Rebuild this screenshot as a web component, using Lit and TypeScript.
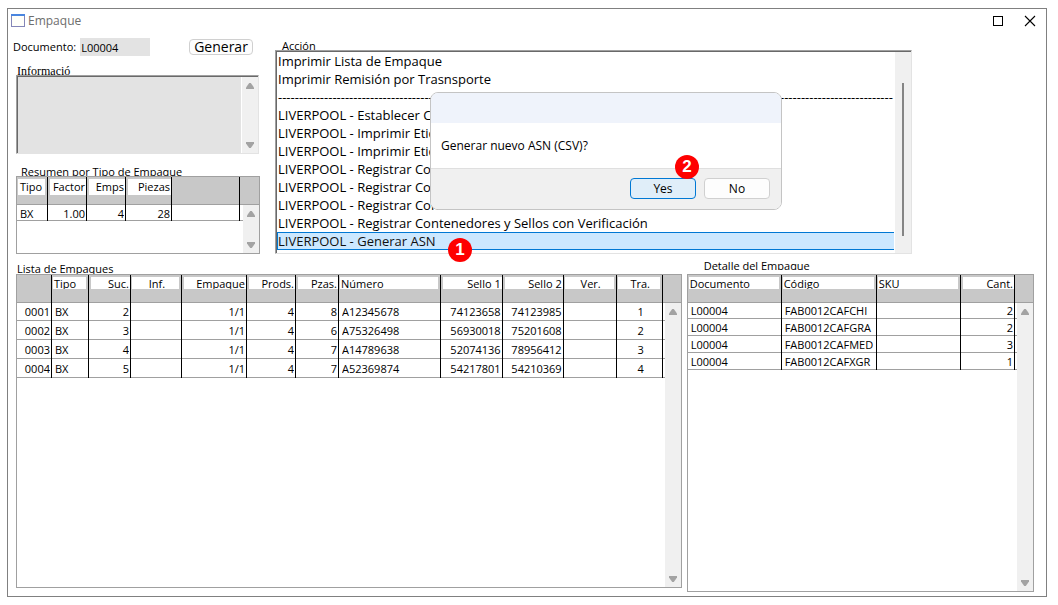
import { LitElement, html, css, svg } from "lit";
import { customElement, property } from "lit/decorators.js";
import { classMap } from "lit/directives/class-map.js";

type Align = "left" | "right" | "center";

interface Column {
  title: string;
  width?: number;
  align?: Align;
}

const PACK_COLUMNS: Column[] = [
  { title: "", width: 35, align: "right" },
  { title: "Tipo", width: 37 },
  { title: "Suc.", width: 42, align: "right" },
  { title: "Inf.", width: 51, align: "center" },
  { title: "Empaque", width: 65, align: "right" },
  { title: "Prods.", width: 49, align: "right" },
  { title: "Pzas.", width: 43, align: "right" },
  { title: "Número" },
  { title: "Sello 1", width: 62, align: "right" },
  { title: "Sello 2", width: 61, align: "right" },
  { title: "Ver.", width: 53, align: "center" },
  { title: "Tra.", width: 46, align: "center" },
];

const PACK_ROWS = [
  ["0001", "BX", "2", "", "1/1", "4", "8", "A12345678", "74123658", "74123985", "", "1"],
  ["0002", "BX", "3", "", "1/1", "4", "6", "A75326498", "56930018", "75201608", "", "2"],
  ["0003", "BX", "4", "", "1/1", "4", "7", "A14789638", "52074136", "78956412", "", "3"],
  ["0004", "BX", "5", "", "1/1", "4", "7", "A52369874", "54217801", "54210369", "", "4"],
];

const DETAIL_COLUMNS: Column[] = [
  { title: "Documento", width: 94 },
  { title: "Código", width: 95 },
  { title: "SKU" },
  { title: "Cant.", width: 54, align: "right" },
];

const DETAIL_ROWS = [
  ["L00004", "FAB0012CAFCHI", "", "2"],
  ["L00004", "FAB0012CAFGRA", "", "2"],
  ["L00004", "FAB0012CAFMED", "", "3"],
  ["L00004", "FAB0012CAFXGR", "", "1"],
];

const SUMMARY_COLUMNS: Column[] = [
  { title: "Tipo", width: 31 },
  { title: "Factor", width: 39, align: "right" },
  { title: "Emps", width: 39, align: "right" },
  { title: "Piezas", width: 46, align: "right" },
  { title: "" },
];

const SUMMARY_ROWS = [["BX", "1.00", "4", "28", ""]];

const ACTIONS = [
  "Imprimir Lista de Empaque",
  "Imprimir Remisión por Trasnsporte",
  "-".repeat(147),
  "LIVERPOOL - Establecer Cita",
  "LIVERPOOL - Imprimir Etiquetas",
  "LIVERPOOL - Imprimir Etiquetas",
  "LIVERPOOL - Registrar Contenedores",
  "LIVERPOOL - Registrar Contenedores",
  "LIVERPOOL - Registrar Contenedores con Verificación",
  "LIVERPOOL - Registrar Contenedores y Sellos con Verificación",
  "LIVERPOOL - Generar ASN",
];

@customElement("scroll-strip")
class ScrollStrip extends LitElement {
  static styles = css`
    :host {
      display: flex;
      flex-direction: column;
      justify-content: space-between;
      align-items: center;
      width: 16px;
      padding: 5px 0 4px;
      box-sizing: border-box;
      background: #f0f0f0;
    }
    .arrow {
      display: block;
      fill: #a3a3a3;
    }
  `;

  render() {
    const arrow = (d: string) => html`
      <svg class="arrow" width="10" height="8" viewBox="0 0 10 8" aria-hidden="true">
        ${svg`<path d=${d} />`}
      </svg>
    `;
    return html`${arrow("M4.2 1h1.6L9 5.6V7H1V5.6z")}${arrow("M4.2 7h1.6L9 2.4V1H1v1.4z")}`;
  }
}

@customElement("data-grid")
class DataGrid extends LitElement {
  @property({ attribute: false }) columns: Column[] = [];
  @property({ attribute: false }) rows: string[][] = [];
  @property() label = "";
  @property({ reflect: true }) density = "normal";

  static styles = css`
    :host {
      --row: 19px;
      --chip: 12px;
      --tail: 2px;
      display: flex;
      border: 1px solid #a0a0a0;
      box-sizing: border-box;
      background: #fff;
      font: 11px/16px "Open Sans", "Noto Sans", sans-serif;
    }
    :host([density="compact"]) {
      --row: 17px;
    }
    :host([density="tall"]) {
      --row: 17px;
      --chip: 16px;
      --tail: 3px;
    }
    .body {
      flex: 1;
      min-width: 0;
    }
    table {
      width: 100%;
      table-layout: fixed;
      border-collapse: separate;
      border-spacing: 0;
    }
    th,
    td {
      padding: 0;
      overflow: hidden;
      white-space: nowrap;
      font-weight: 400;
      text-align: left;
      border-right: 1px solid #000;
    }
    .tail {
      width: var(--tail);
      border-right: 0;
    }
    th {
      height: 25px;
      padding-top: 2px;
      padding-bottom: 1px;
      vertical-align: top;
      background: #c8c8c8;
      box-shadow: inset 0 -1px #a0a0a0;
    }
    .chip {
      height: var(--chip);
      margin: 0 2px 0 1px;
      padding: 0 1px;
      overflow: hidden;
      background: #fff;
      line-height: 14px;
    }
    :host([density="tall"]) .chip {
      padding-left: 2px;
      line-height: 16px;
    }
    .right {
      text-align: right;
    }
    .center {
      text-align: center;
    }
    .center .chip {
      padding-left: 4px;
    }
    .right .chip {
      margin-right: 0;
      margin-left: 2px;
    }
    td {
      height: var(--row);
      line-height: 15px;
      padding: 0 0 0 3px;
      vertical-align: bottom;
      box-shadow: inset 0 -1px #a0a0a0;
    }
    .line {
      padding-bottom: 1px;
      overflow: hidden;
    }
    :host([density="tall"]) .line {
      padding-bottom: 0;
    }
    :host([density="normal"]) .line {
      padding-bottom: 2px;
    }
    .first td {
      height: calc(var(--row) - 1px);
    }
    td.right {
      padding: 0 1px 0 0;
    }
    td.center {
      padding: 0 0 0 3px;
    }
    td.tail {
      padding: 0;
    }
    .rail {
      display: flex;
      flex-direction: column;
    }
    .corner {
      height: 28px;
      background: #c8c8c8;
      box-shadow: inset 0 -1px #a0a0a0;
    }
    .strip {
      flex: 1;
    }
  `;

  render() {
    return html`
      <div class="body">
        <table aria-label=${this.label}>
          <colgroup>
            ${this.columns.map((c) => html`<col style=${c.width ? `width:${c.width}px` : ""} />`)}
            <col class="tail" />
          </colgroup>
          <thead>
            <tr>
              ${this.columns.map(
                (c) => html`<th scope="col" class=${c.align ?? "left"}>
                  ${c.title ? html`<div class="chip">${c.title}</div>` : ""}
                </th>`,
              )}
              <th class="tail"></th>
            </tr>
          </thead>
          <tbody>
            ${this.rows.map(
              (row, i) => html`<tr class=${classMap({ first: i === 0 })}>
                ${row.map(
                  (cell, j) =>
                    html`<td class=${this.columns[j].align ?? "left"}><div class="line">${cell}</div></td>`,
                )}
                <td class="tail"></td>
              </tr>`,
            )}
          </tbody>
        </table>
      </div>
      <div class="rail">
        <div class="corner"></div>
        <scroll-strip class="strip"></scroll-strip>
      </div>
    `;
  }
}

@customElement("app-root")
class AppRoot extends LitElement {
  static styles = css`
    :host {
      display: block;
      box-sizing: border-box;
      min-height: 100vh;
      background: #fff;
      color: #000;
      font: 12px/16px "Open Sans", "Noto Sans", sans-serif;
    }
    * {
      box-sizing: border-box;
    }
    .page {
      display: flex;
      min-height: 100vh;
      padding: 8px 11px 8px 7px;
    }
    .window {
      position: relative;
      flex: 1;
      display: flex;
      flex-direction: column;
      border: 1px solid #808080;
    }
    .titlebar {
      display: flex;
      align-items: center;
      height: 24px;
      padding: 0 10px 0 3px;
      color: #6e6e6e;
    }
    .title {
      flex: 1;
      margin: 0 0 0 3px;
      font-size: 12px;
      font-weight: 400;
    }
    .winbtn {
      display: flex;
      padding: 0;
      border: 0;
      background: none;
    }
    .winbtns {
      display: flex;
      gap: 20px;
    }
    .top {
      display: grid;
      grid-template-columns: 247px 1fr;
      gap: 15px;
      padding: 0 134px 0 5px;
    }
    .side {
      padding-top: 5px;
    }
    .docrow {
      display: flex;
      align-items: center;
      height: 18px;
      font-size: 11px;
    }
    .docfield {
      width: 70px;
      height: 18px;
      margin-left: 4px;
      padding: 0 1px;
      border: 0;
      font: inherit;
      background: #e3e3e3;
    }
    .generate {
      width: 64px;
      height: 16px;
      margin-left: auto;
      margin-right: 7px;
      padding: 0;
      border: 1px solid #d0d0d0;
      border-radius: 4px;
      background: #fdfdfd;
      color: #000;
      font: 14px/14px "Open Sans", "Noto Sans", sans-serif;
    }
    .indent {
      margin-left: 3px;
    }
    .cap {
      display: block;
      overflow: hidden;
      white-space: nowrap;
      font-size: 11px;
    }
    .cap-info {
      height: 19px;
      padding: 7px 0 0 1px;
      font-family: "Liberation Serif", serif;
      font-size: 12px;
    }
    .cap-summary {
      height: 22px;
      padding: 10px 0 0 5px;
    }
    .cap-action {
      height: 17px;
      padding: 5px 0 0 7px;
    }
    .cap-packs {
      height: 20px;
      padding: 7px 0 0 1px;
    }
    .cap-detail {
      height: 16px;
      margin-bottom: 4px;
      padding: 4px 0 0 17px;
    }
    .sunken {
      display: flex;
      border: 1px solid #e3e3e3;
      border-top-color: #a0a0a0;
      border-left-color: #a0a0a0;
      box-shadow: inset 1px 1px #696969;
      padding: 1px 0 0 1px;
    }
    .info {
      height: 79px;
      margin-right: 1px;
    }
    .notes {
      flex: 1;
      min-width: 0;
      padding: 0;
      border: 0;
      border-right: 1px solid #fff;
      resize: none;
      background: #e3e3e3;
    }
    .summary {
      height: 78px;
    }
    .action {
      display: flex;
      flex-direction: column;
    }
    .listbox {
      flex: 1;
    }
    .choices {
      flex: 1;
      min-width: 0;
      height: 200px;
      padding: 0 1px 0 0;
      border: 0;
      border-radius: 0;
      outline: 0;
      overflow: hidden;
      background: #fff;
      color: #000;
      font: 13px/18px "Open Sans", "Noto Sans", sans-serif;
    }
    .choice {
      height: 18px;
      min-height: 18px;
      padding: 0 1px;
      overflow: hidden;
      white-space: nowrap;
      line-height: 18px;
    }
    .choice:checked {
      background: linear-gradient(#cce8ff, #cce8ff);
      box-shadow: inset 0 1px #0078d4, inset 1px -1px #0078d4;
    }
    .track {
      width: 16px;
      padding: 31px 7px 17px;
      background: #f0f0f0;
    }
    .thumb {
      width: 2px;
      height: 100%;
      background: #858585;
    }
    .bottom {
      flex: 1;
      display: grid;
      grid-template-columns: 23fr 12fr;
      gap: 5px;
      padding: 0 12px 4px 8px;
    }
    .pane {
      display: flex;
      flex-direction: column;
      min-width: 0;
    }
    .packs {
      padding-bottom: 4px;
    }
    .grid {
      flex: 1;
    }
    .dialog {
      position: absolute;
      left: 422px;
      top: 83px;
      width: 352px;
      margin: 0;
      padding: 0;
      border: 1px solid #c4c4c4;
      border-radius: 8px;
      background: #fff;
      overflow: hidden;
    }
    .dialog-bar {
      height: 30px;
      background: #eff3fb;
    }
    .message {
      margin: 0;
      padding: 15px 10px 14px;
    }
    .buttons {
      display: flex;
      justify-content: flex-end;
      gap: 8px;
      padding: 9px 11px 10px;
      border-top: 1px solid #dfdfdf;
      background: #f0f0f0;
    }
    .btn {
      width: 66px;
      height: 21px;
      padding: 0;
      border: 1px solid #d0d0d0;
      border-radius: 4px;
      background: #fdfdfd;
      color: #000;
      font: inherit;
      line-height: 16px;
    }
    .primary {
      border-color: #0078d4;
      background: #e0eef9;
    }
    .badge {
      position: absolute;
      width: 24px;
      height: 24px;
      border-radius: 12px;
      background: #fe0000;
      color: #fff;
      text-align: center;
      font: 700 17px/24px "Liberation Sans", sans-serif;
    }
    .badge-one {
      left: 440px;
      top: 229px;
    }
    .badge-two {
      left: 667px;
      top: 146px;
    }
  `;

  render() {
    return html`
      <div class="page">
        <main class="window">
          <header class="titlebar">
            <svg width="14" height="14" viewBox="0 0 14 14" aria-hidden="true">
              <rect x="0.5" y="0.5" width="13" height="12" fill="#fffffa" stroke="#8486b8" />
              <path d="M0 0h14v2H0z" fill="#4a86e0" />
            </svg>
            <h1 class="title">Empaque</h1>
            <div class="winbtns">
              <button class="winbtn" aria-label="Maximizar">
                <svg width="12" height="12" viewBox="0 0 12 12">
                  <rect x="1.5" y="1.5" width="9" height="9" fill="none" stroke="#000" />
                </svg>
              </button>
              <button class="winbtn" aria-label="Cerrar">
                <svg width="12" height="12" viewBox="0 0 12 12">
                  <path d="M1 1l10 10M11 1L1 11" fill="none" stroke="#000" stroke-width="1.1" />
                </svg>
              </button>
            </div>
          </header>

          <section class="top">
            <div class="side">
              <div class="docrow">
                <label for="doc">Documento:</label>
                <input id="doc" class="docfield" value="L00004" readonly />
                <button class="generate">Generar</button>
              </div>
              <div class="indent">
                <label class="cap cap-info" for="notes">Informació</label>
                <div class="sunken info">
                  <textarea id="notes" class="notes" readonly></textarea>
                  <scroll-strip></scroll-strip>
                </div>
                <div class="cap cap-summary">Resumen por Tipo de Empaque</div>
                <data-grid
                  class="summary"
                  density="tall"
                  label="Resumen por Tipo de Empaque"
                  .columns=${SUMMARY_COLUMNS}
                  .rows=${SUMMARY_ROWS}
                ></data-grid>
              </div>
            </div>
            <div class="action">
              <label class="cap cap-action" for="actions">Acción</label>
              <div class="sunken listbox">
                <select id="actions" class="choices" size="11">
                  ${ACTIONS.map(
                    (text, i) =>
                      html`<option class="choice" ?selected=${i === ACTIONS.length - 1}>${text}</option>`,
                  )}
                </select>
                <div class="track"><div class="thumb"></div></div>
              </div>
            </div>
          </section>

          <section class="bottom">
            <div class="pane packs">
              <div class="cap cap-packs">Lista de Empaques</div>
              <data-grid
                class="grid"
                label="Lista de Empaques"
                density="normal"
                .columns=${PACK_COLUMNS}
                .rows=${PACK_ROWS}
              ></data-grid>
            </div>
            <div class="pane">
              <div class="cap cap-detail">Detalle del Empaque</div>
              <data-grid
                class="grid"
                density="compact"
                label="Detalle del Empaque"
                .columns=${DETAIL_COLUMNS}
                .rows=${DETAIL_ROWS}
              ></data-grid>
            </div>
          </section>

          <div class="dialog" role="dialog" aria-labelledby="question">
            <div class="dialog-bar"></div>
            <p id="question" class="message">Generar nuevo ASN (CSV)?</p>
            <div class="buttons">
              <button class="btn primary">Yes</button>
              <button class="btn">No</button>
            </div>
          </div>
          <span class="badge badge-one">1</span>
          <span class="badge badge-two">2</span>
        </main>
      </div>
    `;
  }
}
